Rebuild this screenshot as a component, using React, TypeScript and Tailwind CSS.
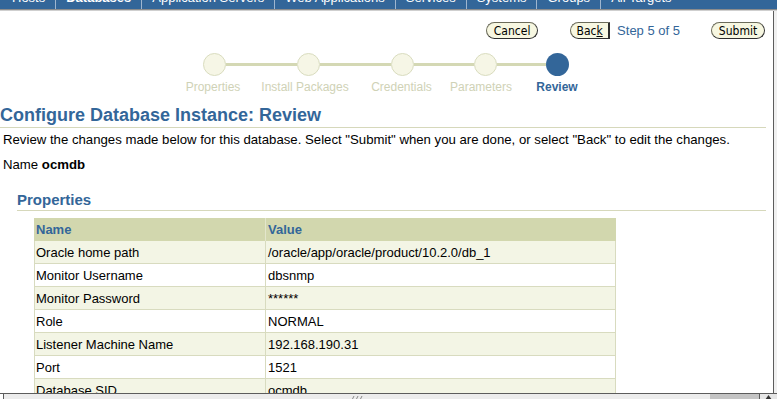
import { ReactNode } from "react";

const tabs = [
  { label: "Hosts" },
  { label: "Databases", active: true },
  { label: "Application Servers" },
  { label: "Web Applications" },
  { label: "Services" },
  { label: "Systems" },
  { label: "Groups" },
  { label: "All Targets" },
];

const rows: [string, string][] = [
  ["Oracle home path", "/oracle/app/oracle/product/10.2.0/db_1"],
  ["Monitor Username", "dbsnmp"],
  ["Monitor Password", "******"],
  ["Role", "NORMAL"],
  ["Listener Machine Name", "192.168.190.31"],
  ["Port", "1521"],
  ["Database SID", "ocmdb"],
];

function PillButton({ children, className = "" }: { children: ReactNode; className?: string }) {
  return (
    <button
      className={`flex h-[17px] items-center justify-center rounded-full border border-[#6b6b5a] border-b-[#2e2e2e] border-r-[#2e2e2e] bg-[#f7f7e1] font-['DejaVu_Sans_Condensed','DejaVu_Sans',sans-serif] text-[12px] leading-none text-black ${className}`}
    >
      {children}
    </button>
  );
}

function Circle({ current }: { current?: boolean }) {
  return current ? (
    <span className="h-[23px] w-[23px] shrink-0 rounded-full bg-[#336699]" />
  ) : (
    <span className="h-[23px] w-[23px] shrink-0 rounded-full border border-[#d9dcbf] bg-[#f6f6e6]" />
  );
}

function Line({ w }: { w: string }) {
  return <span className={`h-[3px] shrink-0 bg-[#d4d8b4] ${w}`} />;
}

export default function App() {
  return (
    <div className="flex h-[399px] w-[777px] flex-col overflow-hidden bg-white font-['Liberation_Sans',Arial,sans-serif] text-black">
      {/* global tab bar, scrolled so only the bottom shows */}
      <div className="flex h-[9px] shrink-0 overflow-hidden bg-[#336699] pl-[2px]">
        {tabs.map((t, i) => (
          <div
            key={t.label}
            className={`flex h-[9px] items-start px-[10px] ${i > 0 ? "border-l border-[#9fb6cf]" : ""}`}
          >
            <span
              className={`-mt-[10px] whitespace-nowrap text-[13px] leading-[15px] text-white ${t.active ? "font-bold" : ""}`}
            >
              {t.label}
            </span>
          </div>
        ))}
      </div>
      <div className="h-[1px] shrink-0 bg-[#8c8c8c]" />
      <div className="h-[1px] shrink-0 bg-[#cfcfcf]" />

      <div className="flex min-h-0 flex-1">
        <div className="min-w-0 flex-1 overflow-hidden">
          {/* buttons */}
          <div className="mt-[11px] flex items-center justify-end pr-[8px]">
            <PillButton className="w-[52px]">Cancel</PillButton>
            <PillButton className="ml-[32px] w-[40px] rounded-r-[3px] border-r-2">
              Bac<span className="underline">k</span>
            </PillButton>
            <span className="ml-[7px] text-[13px] leading-none text-[#336699]">Step 5 of 5</span>
            <PillButton className="ml-[31px] w-[54px]">Submit</PillButton>
          </div>

          {/* train */}
          <div className="mt-[14px] flex items-center pl-[203px]">
            <Circle />
            <Line w="w-[71px]" />
            <Circle />
            <Line w="w-[71px]" />
            <Circle />
            <Line w="w-[60px]" />
            <Circle />
            <Line w="w-[49px]" />
            <Circle current />
          </div>
          <div className="mt-[4px] flex pl-[175px] text-[12px] leading-[14px] text-[#cfd2b6]">
            <span className="w-[76px] text-center">Properties</span>
            <span className="w-[108px] whitespace-nowrap text-center">Install Packages</span>
            <span className="w-[85px] text-center">Credentials</span>
            <span className="w-[74px] text-center">Parameters</span>
            <span className="w-[78px] text-center font-bold text-[#336699]">Review</span>
          </div>

          {/* page header */}
          <div className="mt-[10px] mr-[7px] border-b border-[#d6d8bb] pb-[1px]">
            <h1 className="text-[18px] leading-[22px] font-bold text-[#336699]">
              Configure Database Instance: Review
            </h1>
          </div>
          <p className="mt-[4px] pl-[3px] text-[13.2px] leading-[16px] whitespace-nowrap">
            Review the changes made below for this database. Select "Submit" when you are done, or select "Back" to
            edit the changes.
          </p>
          <p className="mt-[9px] pl-[3px] text-[13.2px] leading-[16px]">
            Name <span className="font-bold">ocmdb</span>
          </p>

          {/* properties */}
          <div className="mt-[18px] ml-[17px] mr-[7px] border-b border-[#d6d8bb] pb-[1px]">
            <h2 className="text-[15px] leading-[18px] font-bold text-[#336699]">Properties</h2>
          </div>
          <div className="mt-[7px] ml-[34px] w-[582px] text-[13px]">
            <div className="flex h-[23px] items-center bg-[#d2d7ae] font-bold text-[#336699]">
              <div className="flex h-full w-[232px] items-center border-r border-[#e3e6cc] pl-[2px] pt-[1px]">
                Name
              </div>
              <div className="flex h-full flex-1 items-center pl-[2px] pt-[1px]">Value</div>
            </div>
            {rows.map(([name, value], i) => (
              <div
                key={name}
                className={`flex h-[23px] border-x border-b border-[#d8dbbf] ${i % 2 === 0 ? "bg-[#f3f5e5]" : "bg-white"}`}
              >
                <div className="flex w-[231px] items-center border-r border-[#d8dbbf] pl-[1px] pt-[2px]">{name}</div>
                <div className="flex flex-1 items-center pl-[2px] pt-[2px]">{value}</div>
              </div>
            ))}
          </div>
        </div>
        {/* vertical scrollbar edge */}
        <div className="w-[4px] shrink-0 border-l border-[#5c5c5c] bg-[#f0f0f0]" />
      </div>

      {/* horizontal scrollbar */}
      <div className="flex h-[6px] shrink-0 border-t border-[#5c5c5c]">
        <div className="w-[3px] bg-white" />
        <div className="flex w-[707px] items-start justify-center border-l border-[#5c5c5c] bg-[#ececec]">
          <svg width="12" height="5" viewBox="0 0 12 5" className="mt-[1px]">
            <path d="M1 5 L3 1 M5 5 L7 1 M9 5 L11 1" stroke="#888" strokeWidth="1" />
          </svg>
        </div>
        <div className="w-[49px] bg-[#c4c4c4]" />
        <div className="flex flex-1 justify-center border-l border-[#5c5c5c] bg-[#e6e6e6]">
          <svg width="7" height="5" viewBox="0 0 7 5" className="mt-[1px]">
            <path d="M3.5 0 L7 5 L0 5 Z" fill="#333" />
          </svg>
        </div>
      </div>
    </div>
  );
}
